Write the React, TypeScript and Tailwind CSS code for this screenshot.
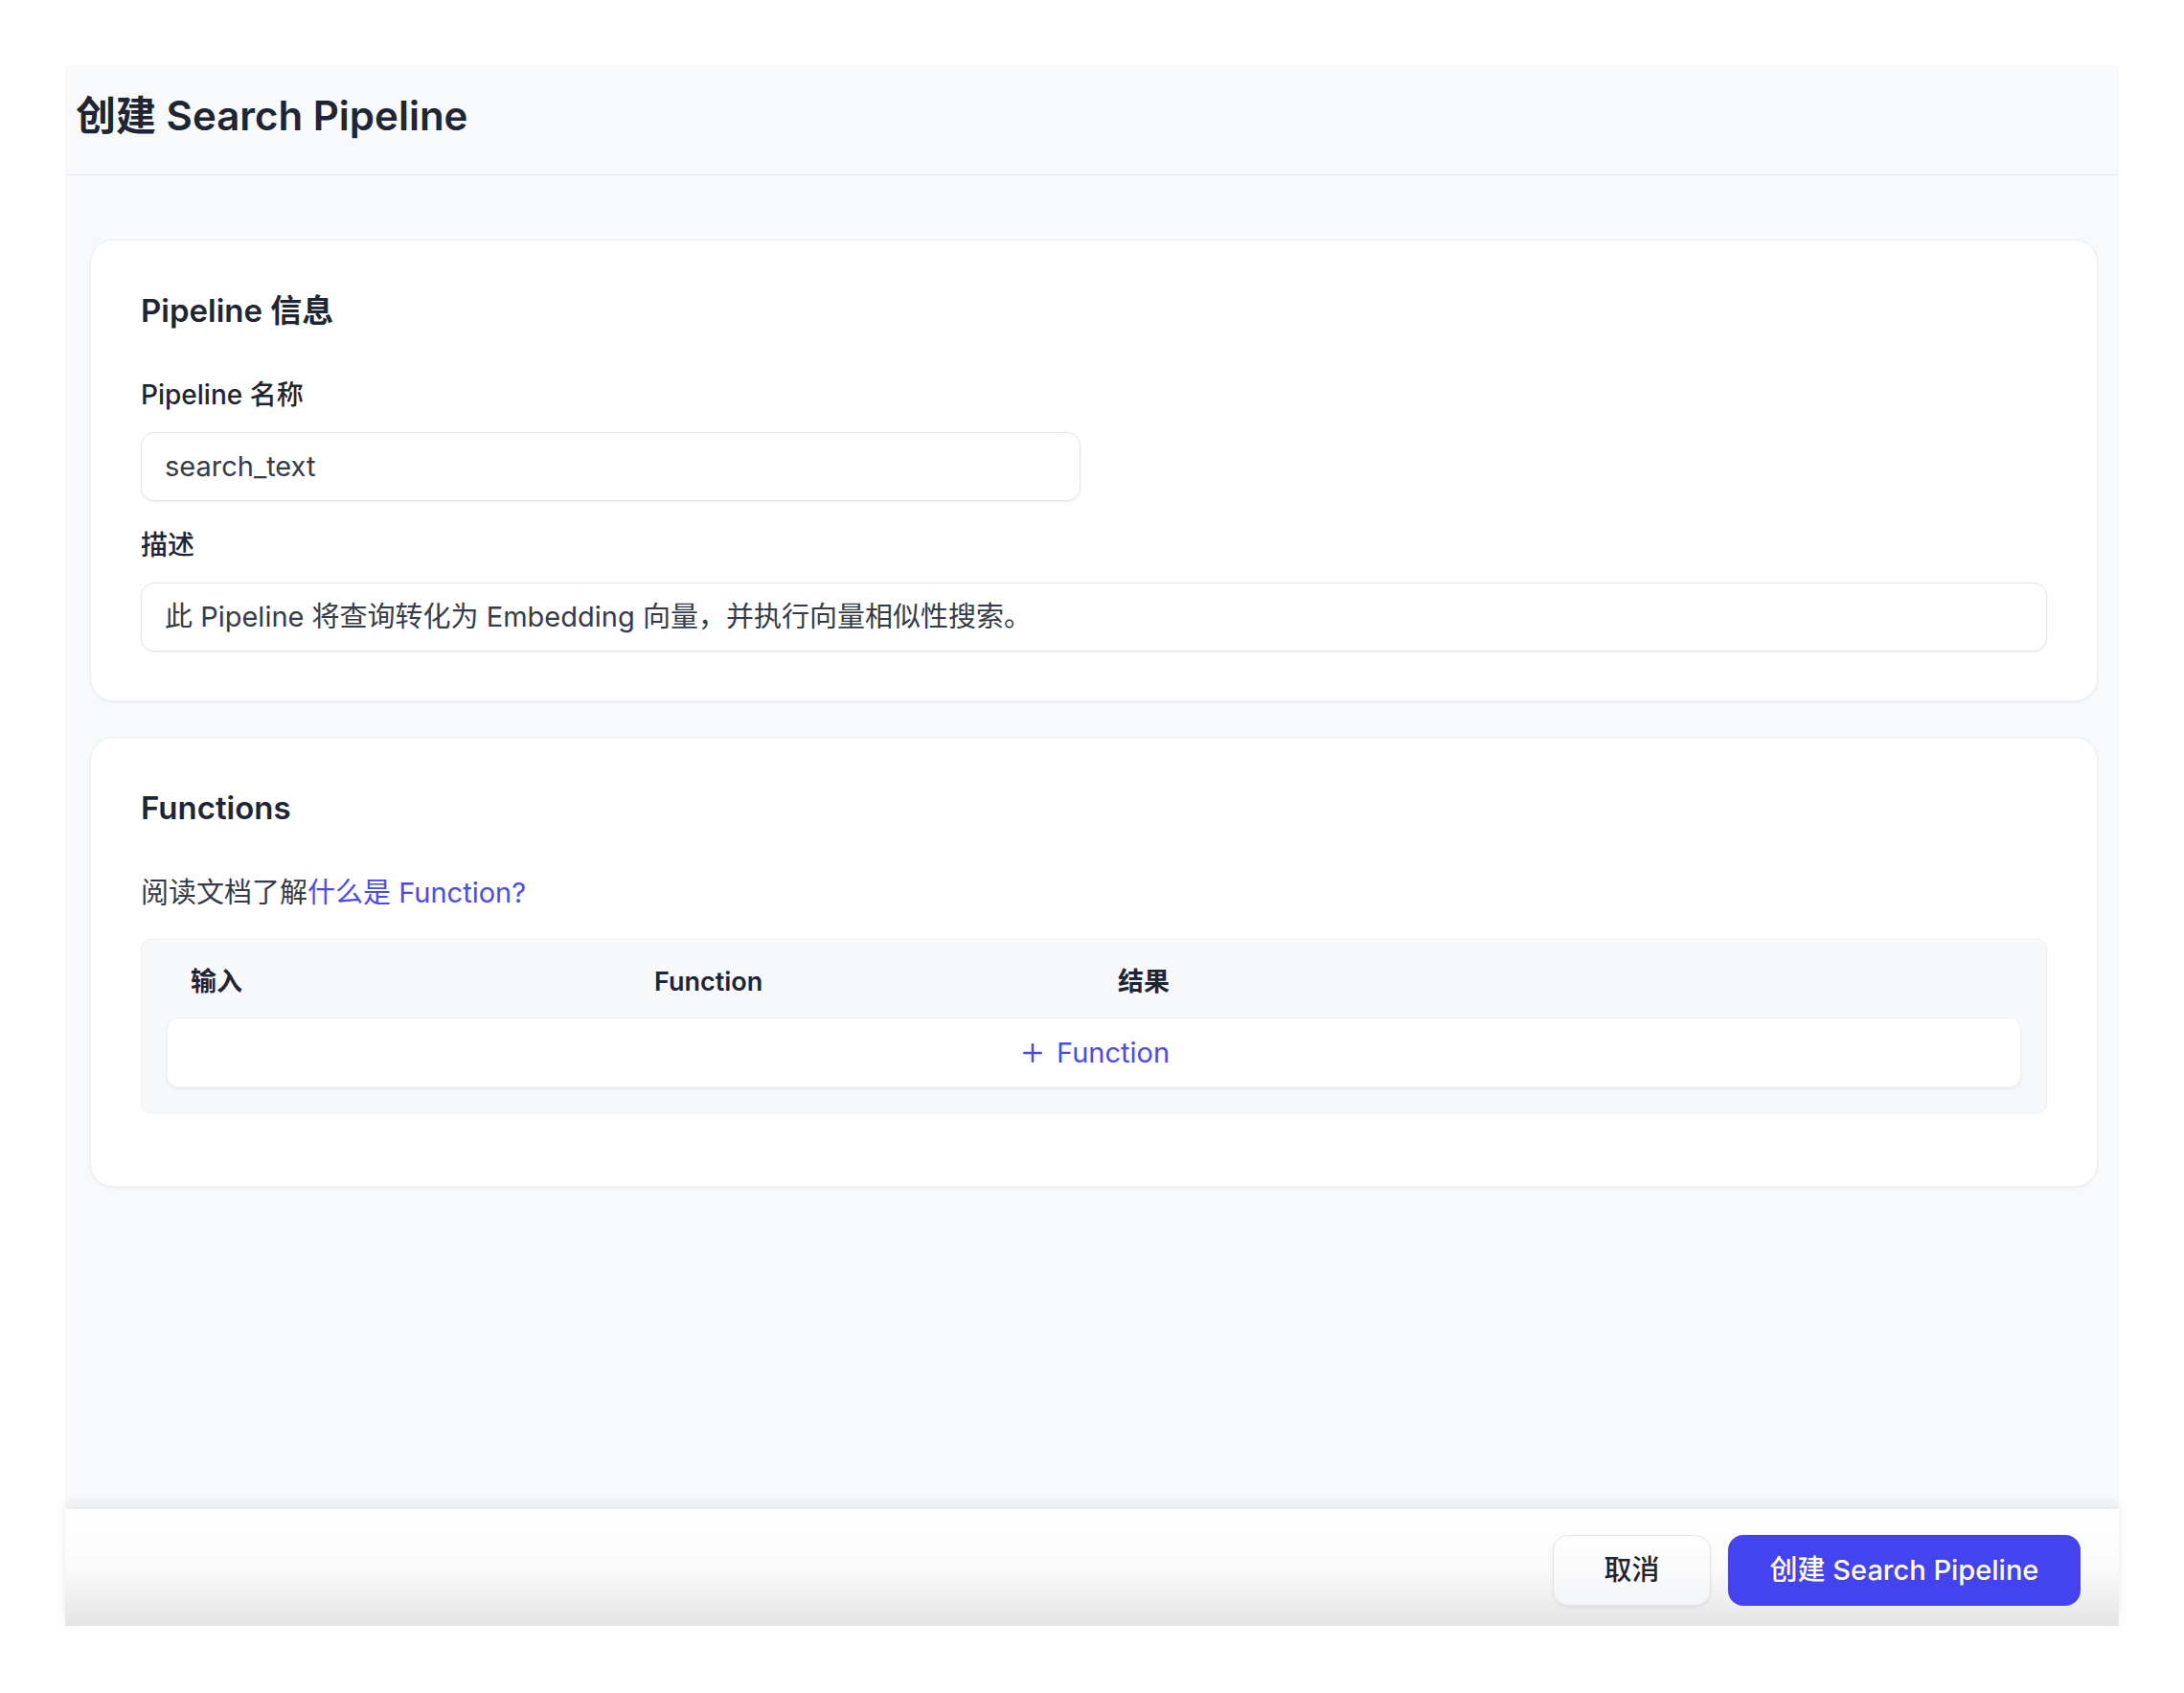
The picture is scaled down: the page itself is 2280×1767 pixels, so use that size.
import { Plus } from 'lucide-react';

const FONT = { fontFamily: 'Inter, "Noto Sans CJK SC", sans-serif' };

// table columns for the functions grid
const COLUMNS = ['输入', 'Function', '结果', ''];

function Card({ title, children, className = '' }: { title: string; children: React.ReactNode; className?: string }) {
  return (
    <section
      className={`rounded-[24px] border border-[#eceef2] bg-white px-[52px] pt-[52px] shadow-[0_1px_3px_rgba(15,23,42,0.05)] ${className}`}
    >
      <h2 className="text-[33px] font-semibold leading-[42px] text-[#1f2633]">{title}</h2>
      {children}
    </section>
  );
}

function Field({ label, value, className = '' }: { label: string; value: string; className?: string }) {
  return (
    <div className="flex flex-col">
      <label className="text-[28px] font-medium leading-[36px] text-[#1f2633]">{label}</label>
      <div
        className={`mt-[21px] flex h-[72px] items-center rounded-[14px] border border-[#e4e6eb] bg-white px-[24px] text-[29px] text-[#353c48] shadow-[0_1px_2px_rgba(15,23,42,0.06)] ${className}`}
      >
        {value}
      </div>
    </div>
  );
}

export default function App() {
  return (
    <div className="min-h-[1767px] bg-white pt-[68px]" style={FONT}>
      <div className="mx-[68px] flex h-[1629px] flex-col bg-[#f8f9fb]">
        <header className="flex h-[115px] shrink-0 items-center border-b border-[#e6e8ee] pb-[10px] pl-[11px]">
          <h1 className="text-[42px] font-semibold text-[#1e2533]">创建 Search Pipeline</h1>
        </header>

        <main className="flex flex-1 flex-col gap-[37px] pl-[26px] pr-[22px] pt-[67px]">
          <Card title="Pipeline 信息" className="pb-[51px]">
            <div className="mt-[49px] flex flex-col gap-[28px]">
              <Field label="Pipeline 名称" value="search_text" className="w-[981px]" />
              <Field label="描述" value="此 Pipeline 将查询转化为 Embedding 向量，并执行向量相似性搜索。" />
            </div>
          </Card>

          <Card title="Functions" className="pb-[76px]">
            <p className="mt-[47px] text-[29px] leading-[42px] text-[#353c48]">
              阅读文档了解<a className="text-[#4a4af0]">什么是 Function?</a>
            </p>
            <div className="mt-[27px] rounded-[10px] border border-[#eef0f3] bg-[#f7f8fa] p-[26px]">
              <div className="grid grid-cols-4">
                {COLUMNS.map((c, i) => (
                  <div key={i} className="pl-[25px] text-[27px] font-semibold leading-[36px] text-[#1f2633]">
                    {c}
                  </div>
                ))}
              </div>
              <button className="mt-[19px] flex h-[73px] w-full items-center justify-center gap-[10px] rounded-[12px] border border-[#f0f1f4] bg-white text-[29px] text-[#4a4af0] shadow-[0_2px_3px_rgba(15,23,42,0.06)]">
                <Plus size={30} strokeWidth={2} />
                Function
              </button>
            </div>
          </Card>
        </main>

        <footer className="relative flex h-[122px] shrink-0 items-center justify-end gap-[18px] bg-gradient-to-b from-white via-[#fbfbfb] to-[#e5e5e6] pr-[40px] pt-[5px] shadow-[0_-6px_12px_rgba(0,0,0,0.07)]">
          <button className="h-[74px] w-[165px] rounded-[16px] border border-[#e0e3ea] bg-gradient-to-b from-white to-[#f4f5f7] text-[29px] font-medium text-[#1f2633] shadow-[0_2px_4px_rgba(15,23,42,0.06)]">
            取消
          </button>
          <button className="h-[74px] w-[368px] rounded-[16px] bg-[#4343ef] text-[29px] font-medium text-white">
            创建 Search Pipeline
          </button>
        </footer>
      </div>
    </div>
  );
}
